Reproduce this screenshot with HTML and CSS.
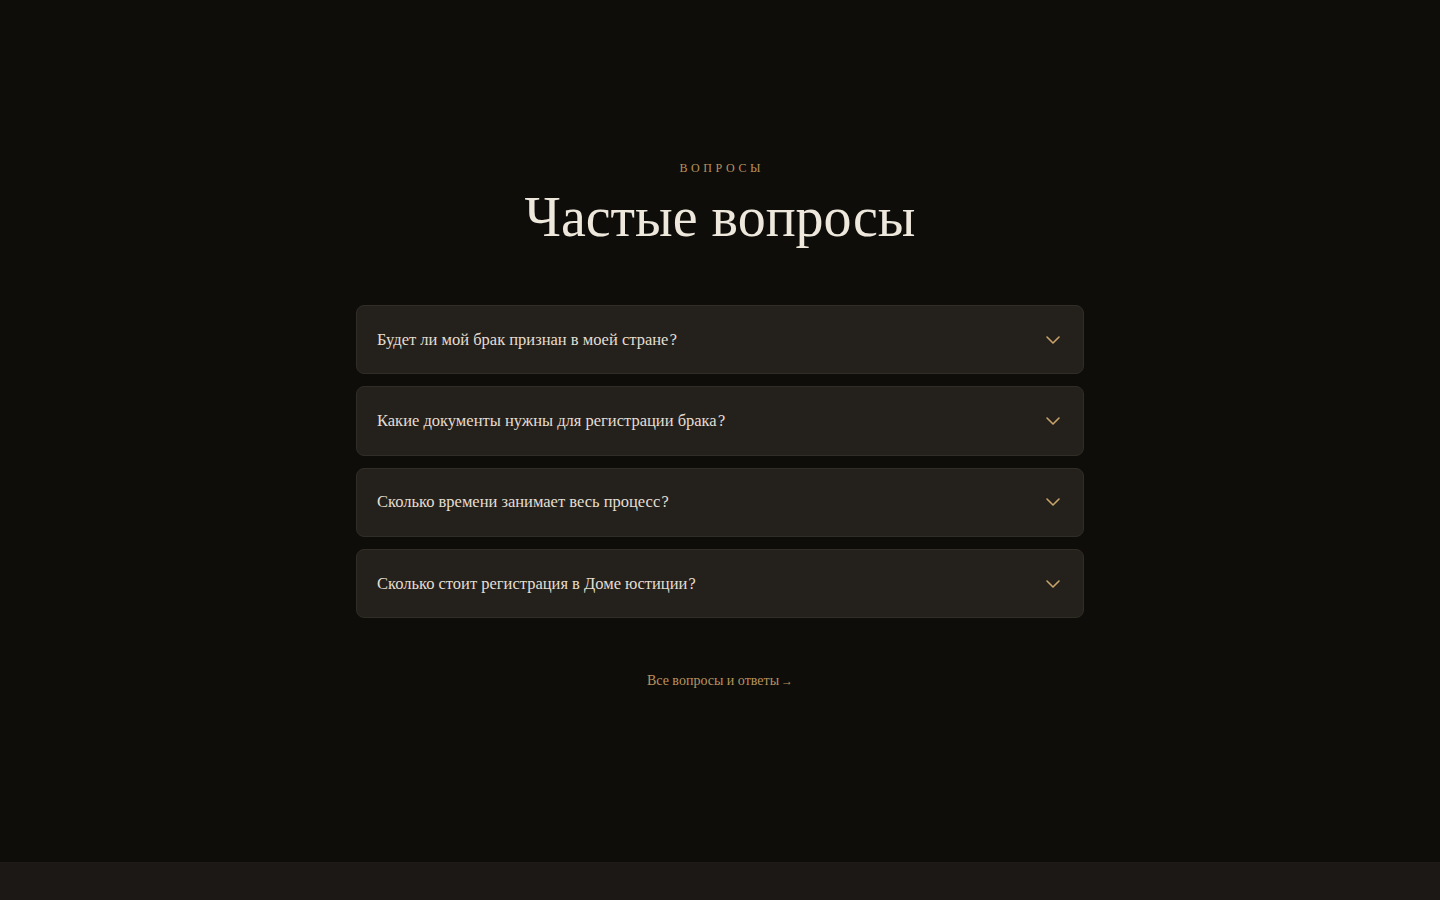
FILE: index.html
```html
<!DOCTYPE html>
<html lang="ru">
<head>
<meta charset="utf-8">
<title>Частые вопросы</title>
<link rel="stylesheet" href="styles.css">
</head>
<body>
<section class="faq">
  <div class="eyebrow">ВОПРОСЫ</div>
  <h2 class="title">Частые вопросы</h2>
  <div class="list">
    <div class="item"><span class="q">Будет ли мой брак признан в моей стране<span class="qm">?</span></span><svg class="chev" width="16" height="16" viewBox="0 0 16 16"><path d="M2 5l6 6 6-6" fill="none" stroke="#c9a46a" stroke-width="1.6" stroke-linecap="round" stroke-linejoin="round"/></svg></div>
    <div class="item"><span class="q">Какие документы нужны для регистрации брака<span class="qm">?</span></span><svg class="chev" width="16" height="16" viewBox="0 0 16 16"><path d="M2 5l6 6 6-6" fill="none" stroke="#c9a46a" stroke-width="1.6" stroke-linecap="round" stroke-linejoin="round"/></svg></div>
    <div class="item"><span class="q">Сколько времени занимает весь процесс<span class="qm">?</span></span><svg class="chev" width="16" height="16" viewBox="0 0 16 16"><path d="M2 5l6 6 6-6" fill="none" stroke="#c9a46a" stroke-width="1.6" stroke-linecap="round" stroke-linejoin="round"/></svg></div>
    <div class="item"><span class="q">Сколько стоит регистрация в Доме юстиции<span class="qm">?</span></span><svg class="chev" width="16" height="16" viewBox="0 0 16 16"><path d="M2 5l6 6 6-6" fill="none" stroke="#c9a46a" stroke-width="1.6" stroke-linecap="round" stroke-linejoin="round"/></svg></div>
  </div>
  <a class="more" href="#">Все вопросы и ответы<span class="arrow">→</span></a>
</section>
<footer class="footer"></footer>
</body>
</html>
```
FILE: styles.css
```css
html, body {
  margin: 0;
  padding: 0;
}
body {
  background: #0e0d0a;
  font-family: "Liberation Serif", "Times New Roman", serif;
  color: #ece6da;
  min-height: 900px;
}
.faq {
  height: 862px;
  box-sizing: border-box;
  padding-top: 160px;
  display: flex;
  flex-direction: column;
  align-items: center;
}
.eyebrow {
  font-size: 12px;
  line-height: 16px;
  letter-spacing: 3.6px;
  color: #b8925c;
  margin-right: -3.6px;
}
.title {
  margin: 5px 0 0;
  font-weight: 400;
  font-size: 56px;
  line-height: 72px;
  color: #ede7dc;
}
.list {
  margin-top: 52px;
  width: 728px;
  display: flex;
  flex-direction: column;
  gap: 12px;
}
.item {
  height: 69.3px;
  box-sizing: border-box;
  background: #24211c;
  border: 1px solid #302c26;
  border-radius: 8px;
  padding: 0 22px 0 20px;
  display: flex;
  align-items: center;
  justify-content: space-between;
}
.q {
  font-size: 16.5px;
  color: #e4ded2;
}
.qm {
  font-family: "DejaVu Serif", serif;
  font-size: 14px;
  margin-left: 1px;
}
.chev {
  display: block;
}
.more {
  margin-top: 55px;
  font-size: 14px;
  color: #b8945f;
  text-decoration: none;
}
.arrow {
  margin-left: 2px;
  font-size: 12px;
}
.footer {
  height: 38px;
  background: #1b1815;
  border-top: 1px solid #1f1c18;
}
```
